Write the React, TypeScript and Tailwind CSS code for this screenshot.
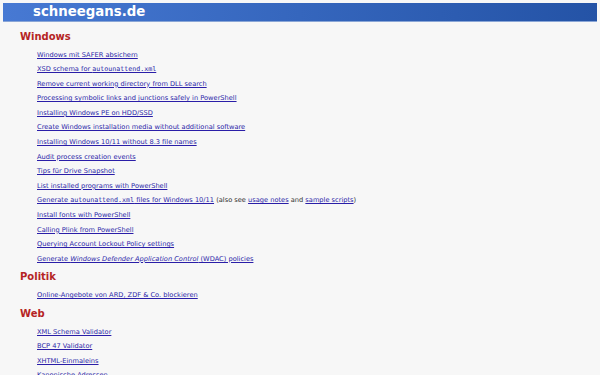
import React from "react";

type Item = React.ReactNode;

const mono = "font-['DejaVu_Sans_Mono',monospace]";

function L({ children }: { children: React.ReactNode }) {
  return (
    <a href="#" className="text-[#2a1ea8] underline decoration-[0.7px] underline-offset-[1px]">
      {children}
    </a>
  );
}

const windows: Item[] = [
  <L>Windows mit SAFER absichern</L>,
  <L>
    XSD schema for <span className={mono}>autounattend.xml</span>
  </L>,
  <L>Remove current working directory from DLL search</L>,
  <L>Processing symbolic links and junctions safely in PowerShell</L>,
  <L>Installing Windows PE on HDD/SSD</L>,
  <L>Create Windows installation media without additional software</L>,
  <L>Installing Windows 10/11 without 8.3 file names</L>,
  <L>Audit process creation events</L>,
  <L>Tips für Drive Snapshot</L>,
  <L>List installed programs with PowerShell</L>,
  <>
    <L>
      Generate <span className={mono}>autounattend.xml</span> files for Windows 10/11
    </L>{" "}
    (also see <L>usage notes</L> and <L>sample scripts</L>)
  </>,
  <L>Install fonts with PowerShell</L>,
  <L>Calling Plink from PowerShell</L>,
  <L>Querying Account Lockout Policy settings</L>,
  <L>
    Generate <i>Windows Defender Application Control</i> (WDAC) policies
  </L>,
];

const politik: Item[] = [<L>Online-Angebote von ARD, ZDF &amp; Co. blockieren</L>];

const web: Item[] = [
  <L>XML Schema Validator</L>,
  <L>BCP 47 Validator</L>,
  <L>XHTML-Einmaleins</L>,
  <L>Kanonische Adressen</L>,
];

function Section({ title, items, first }: { title: string; items: Item[]; first?: boolean }) {
  return (
    <section>
      <h2
        className={`${first ? "mt-[8.5px]" : "mt-[4.8px]"} ml-[20px] h-[12px] text-[10px] font-bold leading-[12px] text-[#b52424]`}
      >
        {title}
      </h2>
      <ul className="mt-[5px] pl-[37px]">
        {items.map((it, i) => (
          <li key={i} className="h-[14.6px] whitespace-nowrap text-[6.65px] leading-[14.6px] text-[#333]">
            {it}
          </li>
        ))}
      </ul>
    </section>
  );
}

export default function App() {
  return (
    <div className="h-[375px] w-[600px] overflow-hidden bg-[#f7f7f7] font-['DejaVu_Sans',sans-serif]">
      <div className="pt-[3px] px-[3px]">
        <header className="flex h-[19px] items-center border-b border-[#8aa6d6] bg-gradient-to-r from-[#4779d3] via-[#3566bd] to-[#2453a6] pl-[30px]">
          <span className="text-[13.3px] font-bold leading-none text-white">schneegans.de</span>
        </header>
      </div>
      <Section title="Windows" items={windows} first />
      <Section title="Politik" items={politik} />
      <Section title="Web" items={web} />
    </div>
  );
}
